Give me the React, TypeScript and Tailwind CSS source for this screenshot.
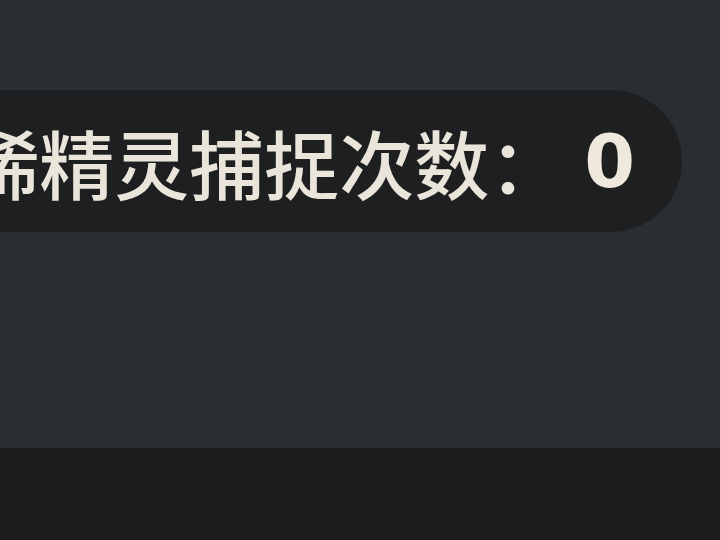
export default function App() {
  return (
    <div className="w-[720px] h-[540px] bg-[#2a2e30] flex flex-col overflow-hidden">
      <div className="pt-[90px] flex-1">
        <div className="ml-[-200px] mr-[38px] h-[142px] rounded-full bg-[#1e1f21] flex items-center justify-end pr-[47px]">
          <span
            className="text-[75px] leading-none font-medium text-[#e9e5da] whitespace-nowrap"
            style={{ fontFamily: '"Noto Sans CJK SC", sans-serif' }}
          >
            珍稀精灵捕捉次数：
          </span>
          <span
            className="ml-[20px] text-[73px] leading-none font-bold text-[#eee9dc]"
            style={{ fontFamily: '"DejaVu Sans", sans-serif' }}
          >
            0
          </span>
        </div>
      </div>
      <div className="h-[92px] bg-[#1c1c1c]" />
    </div>
  );
}
